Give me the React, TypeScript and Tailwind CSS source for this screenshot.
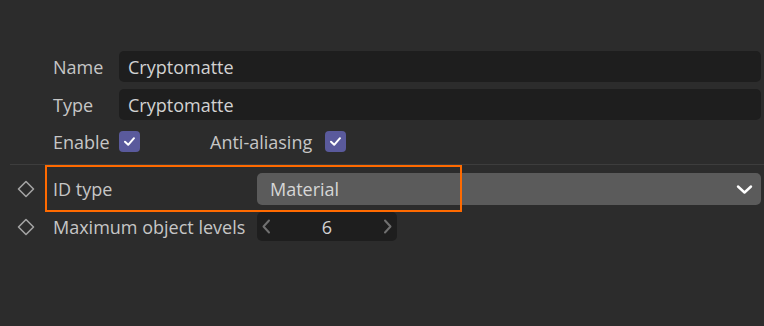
import React from 'react';

const font = { fontFamily: '"Open Sans", "Noto Sans", sans-serif' };

const Check = () => (
    <div className="w-[21px] h-[21px] rounded-[4px] bg-[#5a5a9c] flex items-center justify-center">
        <svg width="13" height="13" viewBox="0 0 13 13" fill="none">
            <path d="M2 6.8 L5.2 9.8 L11 3.2" stroke="#ffffff" strokeWidth="2" strokeLinecap="round" strokeLinejoin="round" />
        </svg>
    </div>
);

const Diamond = () => (
    <svg width="18" height="18" viewBox="0 0 18 18" fill="none">
        <path d="M9 1.5 L16.5 9 L9 16.5 L1.5 9 Z" stroke="#a3a3a3" strokeWidth="1.6" strokeLinejoin="round" />
    </svg>
);

const TextRow: React.FC<{ label: string; value: string }> = ({ label, value }) => (
    <div className="flex items-center h-[31px]">
        <div className="w-[66px] shrink-0">{label}</div>
        <div className="flex-1 h-full rounded-[5px] bg-[#1e1e1e] pl-[9px] flex items-center text-[#d2d2d2]">{value}</div>
    </div>
);

const App: React.FC = () => {
    return (
        <div className="w-[764px] h-[326px] bg-[#2c2c2c] text-[#c6c6c6] text-[18px] leading-[24px] overflow-hidden pt-[51px]" style={font}>
            <div className="pl-[53px] pr-[3px] space-y-[7px]">
                <TextRow label="Name" value="Cryptomatte" />
                <TextRow label="Type" value="Cryptomatte" />
            </div>

            <div className="flex items-center pl-[53px] mt-[11px] h-[21px]">
                <div className="w-[66px] shrink-0">Enable</div>
                <Check />
                <div className="ml-[70px] mr-[13px]">Anti-aliasing</div>
                <Check />
            </div>

            <div className="ml-[10px] mt-[12px] h-px bg-[#3d3d3d]" />

            <div className="relative flex items-center h-[32px] mt-[8px] pl-[17px] pr-[3px]">
                <Diamond />
                <div className="ml-[18px] w-[204px] shrink-0">ID type</div>
                <div className="flex-1 h-full rounded-[5px] bg-[#5b5b5b] pl-[13px] pr-[8px] flex items-center justify-between text-[#d6d6d6]">
                    <span>Material</span>
                    <svg width="17" height="11" viewBox="0 0 17 11" fill="none">
                        <path d="M2 2.5 L8.5 8.5 L15 2.5" stroke="#ffffff" strokeWidth="2.4" strokeLinecap="round" strokeLinejoin="round" />
                    </svg>
                </div>
                <div className="absolute left-[45px] top-[-8px] w-[417px] h-[47px] border-2 border-[#ff6a00] pointer-events-none" />
            </div>

            <div className="flex items-center h-[29px] mt-[7px] pl-[17px]">
                <Diamond />
                <div className="ml-[18px] w-[204px] shrink-0 whitespace-nowrap">Maximum object levels</div>
                <div className="w-[140px] h-full rounded-[5px] bg-[#1e1e1e] flex items-center justify-between px-[4px] text-[#d2d2d2]">
                    <svg width="10" height="15" viewBox="0 0 10 15" fill="none">
                        <path d="M8 1.5 L2.5 7.5 L8 13.5" stroke="#707070" strokeWidth="2" strokeLinecap="round" strokeLinejoin="round" />
                    </svg>
                    <span>6</span>
                    <svg width="10" height="15" viewBox="0 0 10 15" fill="none">
                        <path d="M2 1.5 L7.5 7.5 L2 13.5" stroke="#707070" strokeWidth="2" strokeLinecap="round" strokeLinejoin="round" />
                    </svg>
                </div>
            </div>
        </div>
    );
};

export default App;
